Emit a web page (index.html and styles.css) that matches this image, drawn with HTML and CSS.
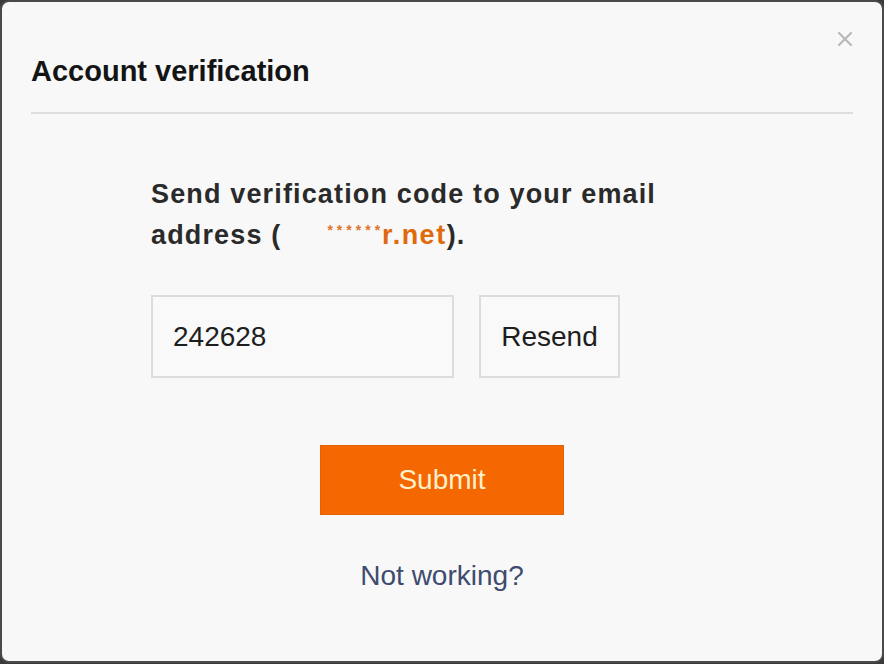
FILE: index.html
```html
<!DOCTYPE html>
<html lang="en">
<head>
<meta charset="utf-8">
<title>Account verification</title>
<link rel="stylesheet" href="styles.css">
</head>
<body>
<div class="dialog">
  <div class="header">
    <h1 class="title">Account verification</h1>
    <span class="close" aria-label="Close">
      <svg width="16" height="16" viewBox="0 0 16 16"><path d="M2 2L14 14M14 2L2 14" stroke="#b8b8b8" stroke-width="2.2" stroke-linecap="round"/></svg>
    </span>
  </div>
  <div class="divider"></div>
  <div class="body">
    <p class="message">Send verification code to your email address (<span class="gap"></span><span class="stars">******</span><span class="domain">r.net</span>).</p>
    <div class="code-row">
      <div class="code-input">242628</div>
      <div class="resend">Resend</div>
    </div>
    <div class="submit-row">
      <div class="submit">Submit</div>
    </div>
    <div class="help">Not working?</div>
  </div>
</div>
</body>
</html>
```

FILE: styles.css
```css
html, body {
  margin: 0;
  padding: 0;
  background: #3a3a3a;
}
body {
  width: 884px;
  height: 664px;
  font-family: "Liberation Sans", Arial, sans-serif;
}
.dialog {
  box-sizing: border-box;
  width: 884px;
  height: 663px;
  background: #f8f8f8;
  border: 2px solid #4a4a4a;
  border-radius: 9px;
  position: relative;
}
.header {
  padding: 52px 0 0 29px;
  height: 58px;
  box-sizing: content-box;
}
.title {
  margin: 0;
  font-size: 29px;
  font-weight: bold;
  color: #141414;
  line-height: 34px;
}
.close {
  position: absolute;
  top: 29px;
  right: 29px;
  width: 16px;
  height: 16px;
}
.close svg { display: block; }
.divider {
  margin: 0 29px;
  height: 2px;
  background: #dedede;
}
.body {
  padding-top: 60px;
}
.message {
  margin: 0 0 0 149px;
  width: 560px;
  font-size: 27px;
  font-weight: bold;
  line-height: 41px;
  color: #2a2a2a;
  letter-spacing: 1.15px;
}
.gap {
  display: inline-block;
  width: 46px;
}
.stars {
  font-size: 14px;
  line-height: 0;
  color: #e0732a;
  vertical-align: 9px;
  letter-spacing: 4px;
  margin-right: -2px;
}
.domain {
  color: #df6a0c;
  letter-spacing: 1.5px;
}
.code-row {
  display: flex;
  gap: 25px;
  margin: 39px 0 0 149px;
}
.code-input, .resend {
  box-sizing: border-box;
  height: 83px;
  border: 2px solid #dcdcdc;
  background: #f9f9f9;
  display: flex;
  align-items: center;
  font-size: 28px;
  color: #1e1e1e;
}
.code-input {
  width: 303px;
  padding-left: 20px;
}
.resend {
  width: 141px;
  justify-content: center;
}
.submit-row {
  margin-top: 67px;
  display: flex;
  justify-content: center;
}
.submit {
  width: 244px;
  height: 70px;
  background: #f56700;
  color: #fff0cc;
  font-size: 28px;
  display: flex;
  align-items: center;
  justify-content: center;
  box-shadow: inset 0 0 0 1px #e66000;
}
.help {
  margin-top: 45px;
  text-align: center;
  font-size: 28px;
  color: #3e4b6f;
}
```
